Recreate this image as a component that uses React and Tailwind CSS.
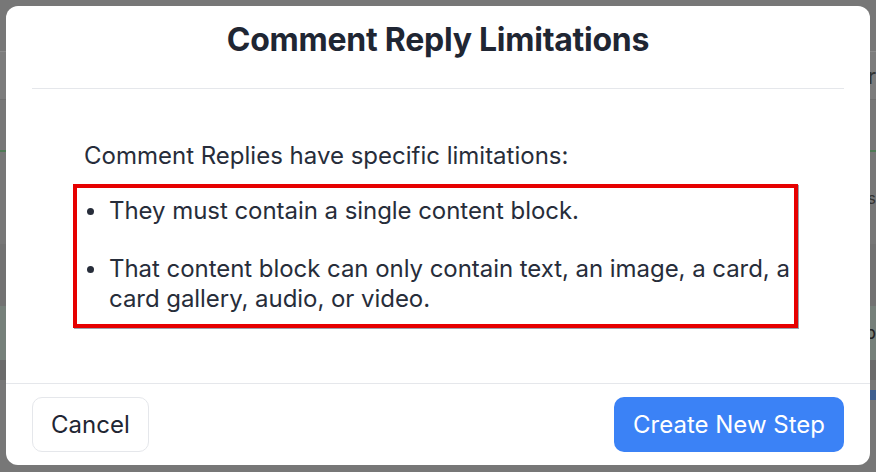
import React from 'react';

const BackdropApp = () => (
    // dimmed page behind the dialog, only a sliver shows at the edges
    <div className="absolute inset-0 flex flex-col bg-[#777777]">
        <div className="h-[52px] border-b border-[#8a8a8a]" />
        <div className="h-[48px] flex justify-end items-center bg-[#7c7c7c] border-b border-[#6f6f6f]">
            <span className="text-[#333] text-[22px] leading-none">r</span>
        </div>
        <div className="h-[52px] border-b-2 border-[#4f7a55]" />
        <div className="h-[92px] flex justify-end items-center">
            <span className="text-[#333] text-[16px] leading-none">es</span>
        </div>
        <div className="h-[62px] bg-[#727272]" />
        <div className="h-[54px] bg-[#76807a] flex justify-end items-center">
            <span className="text-[#222] text-[18px] leading-none">b</span>
        </div>
        <div className="h-[20px] bg-[#6b6b6b]" />
        <div className="flex-1 flex justify-end pt-[10px]">
            <div className="w-[12px] h-[10px] bg-[#3f5f8f]" />
        </div>
    </div>
);

const App = () => {
    const items = [
        'They must contain a single content block.',
        'That content block can only contain text, an image, a card, a card gallery, audio, or video.',
    ];

    return (
        <div
            className="relative w-[876px] h-[472px] overflow-hidden"
            style={{ fontFamily: 'Inter, "Noto Sans", sans-serif' }}
        >
            <BackdropApp />

            {/* Dialog */}
            <div className="absolute left-[6px] top-[6px] w-[864px] h-[459px] bg-white rounded-[12px] flex flex-col">
                {/* Header */}
                <div className="mx-[26px] h-[83px] pb-[14px] flex items-center justify-center border-b border-[#e5e7eb]">
                    <h2 className="text-[32px] leading-[40px] font-bold text-[#1f2633] tracking-[-0.25px]">
                        Comment Reply Limitations
                    </h2>
                </div>

                {/* Body */}
                <div className="flex-1 pt-[52px] pl-[67px] pr-[72px] text-[#272d3a]">
                    <p className="text-[24px] leading-[30px] pl-[11px]">Comment Replies have specific limitations:</p>
                    <ul className="mt-[13px] border-4 border-[#e60000] pt-[8px] pb-[10px] pl-[10px] pr-0 flex flex-col gap-[28px] shadow-[1px_1px_0_#9ca3af]">
                        {items.map((text, idx) => (
                            <li key={idx} className="flex text-[24px] leading-[30px]">
                                <span className="w-[22px] flex-shrink-0 flex items-start pt-[12px]">
                                    <span className="w-[7px] h-[7px] rounded-full bg-[#272d3a]" />
                                </span>
                                <span className="tracking-[-0.05px]">{text}</span>
                            </li>
                        ))}
                    </ul>
                </div>

                {/* Footer */}
                <div className="h-[82px] border-t border-[#e5e7eb] px-[26px] flex items-center justify-between">
                    <button className="h-[55px] px-[18px] rounded-[10px] border border-[#e5e7eb] bg-white text-[24px] text-[#1f2633]">
                        Cancel
                    </button>
                    <button className="h-[55px] px-[19px] rounded-[10px] bg-[#3b82f6] text-[24px] text-white">
                        Create New Step
                    </button>
                </div>
            </div>
        </div>
    );
};

export default App;
